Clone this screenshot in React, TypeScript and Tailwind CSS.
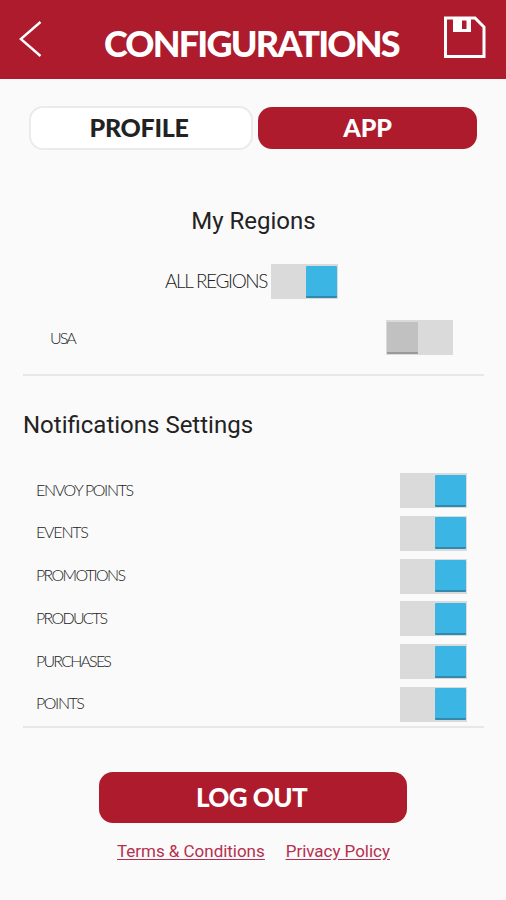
import clsx from "clsx";

const notifications = [
  { label: "ENVOY POINTS", tracking: "tracking-[-1.35px]" },
  { label: "EVENTS", tracking: "tracking-[-1.2px]" },
  { label: "PROMOTIONS", tracking: "tracking-[-1.65px]" },
  { label: "PRODUCTS", tracking: "tracking-[-1.7px]" },
  { label: "PURCHASES", tracking: "tracking-[-1.8px]" },
  { label: "POINTS", tracking: "tracking-[-1.4px]" },
];

function Toggle({ on = false }: { on?: boolean }) {
  return (
    <button
      type="button"
      role="switch"
      aria-checked={on}
      className={clsx("flex h-[35px] w-[67px] shrink-0 items-center bg-[#dadada] px-px", on && "justify-end")}
    >
      <span
        className={clsx(
          "h-[32px] w-[31px] rounded-[1px] border-b-2",
          on ? "border-[#3189ad] bg-[#3ab5e4]" : "border-[#999999] bg-[#c1c1c1]"
        )}
      />
    </button>
  );
}

function Header() {
  return (
    <header className="flex h-[79px] items-start bg-[#ad1b2d] pl-[19px] text-white">
      <svg className="mt-[20px] h-[38px] w-[23px]" viewBox="0 0 23 38" fill="none" stroke="currentColor" strokeWidth="2.4">
        <path d="M21.5 2 L1.8 19 L21.5 36" />
      </svg>
      <h1 className="mt-[20px] ml-[62px] w-[339px] whitespace-nowrap text-[36px] leading-[46px] font-black tracking-[-1.8px]">
        CONFIGURATIONS
      </h1>
      <svg className="mt-[15px] h-[44px] w-[43px]" viewBox="0 0 43 44" fill="none" stroke="currentColor" strokeWidth="3">
        <path d="M2.5 3 H32 L41 12 V41.5 H2.5 Z" />
        <path d="M10 3 H28 V17 H10 Z M19 5.5 H23.5 V14 H19 Z" fill="currentColor" fillRule="evenodd" stroke="none" />
      </svg>
    </header>
  );
}

export default function App() {
  return (
    <main className="h-[900px] w-[506px] overflow-hidden bg-[#fafafa] font-['Lato',sans-serif] text-[#222222]">
      <Header />

      <div className="mt-[27px] flex gap-[5px] pl-[29px] text-[25px] font-black">
        <button className="h-[44px] w-[224px] rounded-[14px] border-2 border-[#ebebeb] bg-white pr-[4px] pb-[3px] leading-[38px] tracking-[-0.3px]">
          PROFILE
        </button>
        <button className="mt-px h-[42px] w-[219px] rounded-[14px] bg-[#ad1b2d] pb-[3px] leading-[38px] tracking-[-0.2px] text-white">
          APP
        </button>
      </div>

      <section className="mr-[22px] ml-[23px] mt-[56px] h-[170px] border-b-2 border-[#e7e7e7]">
        <h2 className="text-center font-['Roboto',sans-serif] text-[24px] leading-[30px]">My Regions</h2>
        <div className="mt-[28px] flex items-center pl-[142px]">
          <span className="w-[106px] whitespace-nowrap text-[19px] font-light tracking-[-1.35px]">ALL REGIONS</span>
          <Toggle on />
        </div>
        <div className="mt-[21px] flex items-center justify-between pl-[27px] pr-[31px]">
          <span className="text-[16px] font-light tracking-[-1.9px]">USA</span>
          <Toggle />
        </div>
      </section>

      <section className="mr-[22px] ml-[23px] mt-[34px] border-b-2 border-[#e7e7e7] pb-[4px]">
        <h2 className="font-['Roboto',sans-serif] text-[24px] leading-[30px]">Notifications Settings</h2>
        <ul className="mt-[33px] flex flex-col gap-[7.8px] pl-[13px] pr-[17px]">
          {notifications.map(({ label, tracking }) => (
            <li key={label} className="flex items-center justify-between">
              <span className={clsx("pb-[2px] text-[16px] font-light", tracking)}>{label}</span>
              <Toggle on />
            </li>
          ))}
        </ul>
      </section>

      <footer className="mt-[44px] flex flex-col items-center">
        <button className="h-[51px] w-[308px] rounded-[14px] bg-[#ad1b2d] pr-[3px] text-[26px] font-black leading-[51px] tracking-[-0.6px] text-white">
          LOG OUT
        </button>
        <div className="mt-[17px] flex gap-[21px] whitespace-nowrap pl-px font-['Roboto',sans-serif] text-[17px] leading-[22px] tracking-[-0.03px] text-[#b5304f] underline underline-offset-2">
          <a href="#terms">Terms &amp; Conditions</a>
          <a href="#privacy">Privacy Policy</a>
        </div>
      </footer>
    </main>
  );
}
